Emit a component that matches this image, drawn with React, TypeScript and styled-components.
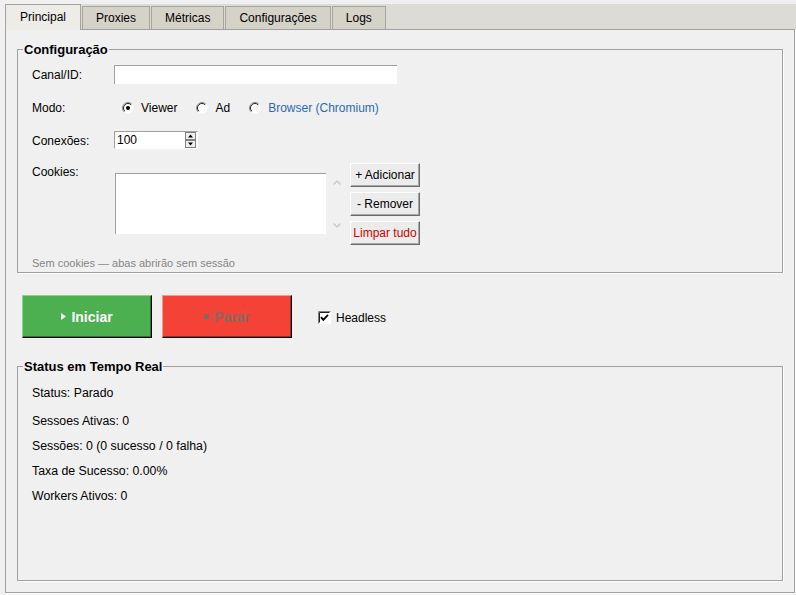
import styled, { createGlobalStyle } from 'styled-components';

const GlobalStyle = createGlobalStyle`
	html, body {
		margin: 0;
		padding: 0;
		background: #f0f0f0;
	}
	body {
		font-family: "Liberation Sans", Arial, sans-serif;
		font-size: 12px;
		color: #000;
	}
	#root {
		width: 796px;
		height: 595px;
		overflow: hidden;
	}
	* {
		box-sizing: border-box;
	}
`;

const TABS = ['Principal', 'Proxies', 'Métricas', 'Configurações', 'Logs'];

const STATS = [
	'Status: Parado',
	'Sessoes Ativas: 0',
	'Sessões: 0 (0 sucesso / 0 falha)',
	'Taxa de Sucesso: 0.00%',
	'Workers Ativos: 0',
];

function RadioMark({ checked }: { checked?: boolean }) {
	return (
		<svg width="12" height="12" viewBox="0 0 12 12">
			<circle cx="6" cy="6" r="5.5" fill="#fff" />
			<path d="M9.9 2.1 A5.5 5.5 0 0 0 2.1 9.9" fill="none" stroke="#8a8a8a" strokeWidth="1" />
			<path d="M9.2 2.8 A4.5 4.5 0 0 0 2.8 9.2" fill="none" stroke="#202020" strokeWidth="1" />
			{checked && <circle cx="6" cy="6" r="2" fill="#000" />}
		</svg>
	);
}

function CheckMark() {
	return (
		<svg width="13" height="13" viewBox="0 0 13 13">
			<rect x="0.5" y="0.5" width="12" height="12" fill="#fff" stroke="#fff" />
			<path d="M0.5 12.5 V0.5 H12.5" fill="none" stroke="#808080" />
			<path d="M1.5 11.5 V1.5 H11.5" fill="none" stroke="#202020" />
			<path d="M3 6.2 L5.3 8.8 L10 3.8" fill="none" stroke="#000" strokeWidth="1.8" />
		</svg>
	);
}

function SpinArrows() {
	return (
		<svg width="11" height="16" viewBox="0 0 11 16">
			<rect x="0.5" y="0.5" width="10" height="7" fill="#f0f0f0" stroke="#808080" />
			<rect x="0.5" y="8.5" width="10" height="7" fill="#f0f0f0" stroke="#808080" />
			<path d="M3 5.5 L5.5 2.5 L8 5.5 Z" fill="#000" />
			<path d="M3 10.5 L5.5 13.5 L8 10.5 Z" fill="#000" />
		</svg>
	);
}

function Chevron({ up }: { up?: boolean }) {
	return (
		<svg width="8" height="5" viewBox="0 0 8 5">
			<path d={up ? 'M0.5 4.5 L4 1 L7.5 4.5' : 'M0.5 0.5 L4 4 L7.5 0.5'} fill="none" stroke="#c4c4c4" strokeWidth="1.2" />
		</svg>
	);
}

export default function App() {
	return (
		<>
			<GlobalStyle />
			<Window>
				<TabStrip>
					{TABS.map((t, i) => (
						<Tab key={t} $active={i === 0}>
							{t}
						</Tab>
					))}
				</TabStrip>
				<Panel>
					<Group>
						<Legend>Configuração</Legend>
						<ConfigBody>
							<FormRow $height={19}>
								<Label>Canal/ID:</Label>
								<Entry />
							</FormRow>
							<FormRow $height={20} $gap={13}>
								<Label>Modo:</Label>
								<RadioGroup>
									<RadioOption>
										<RadioMark checked />
										Viewer
									</RadioOption>
									<RadioOption>
										<RadioMark />
										Ad
									</RadioOption>
									<RadioOption $accent>
										<RadioMark />
										Browser (Chromium)
									</RadioOption>
								</RadioGroup>
							</FormRow>
							<FormRow $height={18} $gap={14}>
								<Label>Conexões:</Label>
								<Spinbox>
									<span>100</span>
									<SpinArrows />
								</Spinbox>
							</FormRow>
							<CookieRow>
								<CookieLabel>Cookies:</CookieLabel>
								<CookieBox />
								<ScrollCol>
									<Chevron up />
									<Chevron />
								</ScrollCol>
								<ButtonCol>
									<SmallButton>+ Adicionar</SmallButton>
									<SmallButton>- Remover</SmallButton>
									<SmallButton $danger>Limpar tudo</SmallButton>
								</ButtonCol>
							</CookieRow>
							<Hint>Sem cookies — abas abrirão sem sessão</Hint>
						</ConfigBody>
					</Group>

					<Actions>
						<BigButton $bg="#4caf50" $light="#86d488" $fg="#fff">
							<svg width="5" height="7" viewBox="0 0 5 7">
								<path d="M0 0 L5 3.5 L0 7 Z" fill="#fff" />
							</svg>
							Iniciar
						</BigButton>
						<BigButton $bg="#f44336" $light="#f9978e" $fg="#8a6863">
							<svg width="5" height="5" viewBox="0 0 5 5">
								<rect width="5" height="5" fill="#7d6a67" />
							</svg>
							Parar
						</BigButton>
						<Check>
							<CheckMark />
							Headless
						</Check>
					</Actions>

					<Group $grow>
						<Legend>Status em Tempo Real</Legend>
						<StatusBody>
							{STATS.map((s) => (
								<StatLine key={s}>{s}</StatLine>
							))}
						</StatusBody>
					</Group>
				</Panel>
			</Window>
		</>
	);
}

const Window = styled.div`
	display: flex;
	flex-direction: column;
	padding: 4px 0 0 5px;
	height: 595px;
`;

const TabStrip = styled.div`
	position: relative;
	z-index: 1;
	display: flex;
	align-items: flex-end;
	gap: 1px;
	height: 25px;
	background: #dcdbd5;
`;

const Tab = styled.div<{ $active?: boolean }>`
	display: flex;
	align-items: center;
	height: ${(p) => (p.$active ? 26 : 23)}px;
	margin-bottom: ${(p) => (p.$active ? -1 : 0)}px;
	padding: 0 ${(p) => (p.$active ? 14 : 13)}px ${(p) => (p.$active ? 1 : 0)}px;
	border: 1px solid #a6a59d;
	border-bottom: none;
	background: ${(p) => (p.$active ? '#edece8' : '#d5d2c8')};
	font-size: 12px;
	color: #000;
`;

const Panel = styled.div`
	display: flex;
	flex-direction: column;
	width: 790px;
	height: 564px;
	padding: 12px 11px 11px;
	border: 1px solid #a0a0a0;
	box-shadow: 1px 1px 0 #fff;
	background: #f0f0f0;
`;

const Group = styled.fieldset<{ $grow?: boolean }>`
	margin: 0;
	padding: 0;
	min-width: 0;
	border: 1px solid #a0a0a0;
	box-shadow: 1px 1px 0 #fff;
	${(p) => (p.$grow ? 'flex: 1;' : '')}
`;

const Legend = styled.legend`
	margin-left: 5px;
	padding: 0 1px;
	font-size: 13px;
	font-weight: bold;
	line-height: 15px;
	color: #000;
`;

const ConfigBody = styled.div`
	display: flex;
	flex-direction: column;
	padding: 8px 14px 2px;
`;

const FormRow = styled.div<{ $height: number; $gap?: number }>`
	display: grid;
	grid-template-columns: 82px auto;
	align-items: center;
	height: ${(p) => p.$height}px;
	margin-top: ${(p) => p.$gap ?? 0}px;
`;

const Label = styled.span`
	line-height: 14px;
	padding-top: 1px;
`;

const Entry = styled.div`
	width: 283px;
	height: 19px;
	background: #fff;
	border-top: 1px solid #a0a0a0;
	border-left: 1px solid #a0a0a0;
`;

const RadioGroup = styled.div`
	display: flex;
	align-items: center;
	gap: 19px;
	padding: 2px 0 0 8px;
`;

const RadioOption = styled.label<{ $accent?: boolean }>`
	display: flex;
	align-items: center;
	gap: 7px;
	color: ${(p) => (p.$accent ? '#2b6bb2' : '#000')};
`;

const Spinbox = styled.div`
	display: flex;
	align-items: center;
	justify-content: space-between;
	width: 84px;
	height: 18px;
	padding: 0 1px 0 2px;
	background: #fff;
	border-top: 1px solid #a0a0a0;
	border-left: 1px solid #a0a0a0;
	border-right: 1px solid #fff;
	border-bottom: 1px solid #fff;
`;

const CookieRow = styled.div`
	display: flex;
	align-items: flex-start;
	margin-top: 14px;
`;

const CookieLabel = styled.span`
	width: 83px;
	padding-top: 2px;
	line-height: 14px;
`;

const CookieBox = styled.div`
	width: 211px;
	height: 61px;
	margin-top: 10px;
	background: #fff;
	border-top: 1px solid #a0a0a0;
	border-left: 1px solid #a0a0a0;
`;

const ScrollCol = styled.div`
	display: flex;
	flex-direction: column;
	align-items: center;
	justify-content: space-between;
	width: 22px;
	height: 61px;
	margin-top: 10px;
	padding: 7px 0 6px;
`;

const ButtonCol = styled.div`
	display: flex;
	flex-direction: column;
	gap: 5px;
	margin-left: 2px;
`;

const SmallButton = styled.button<{ $danger?: boolean }>`
	width: 70px;
	height: 24px;
	padding: 0;
	font-family: inherit;
	font-size: 12px;
	color: ${(p) => (p.$danger ? '#d40000' : '#000')};
	background: #ececec;
	border: 1px solid;
	border-color: #fff #6a6a6a #6a6a6a #fff;
	box-shadow: inset -1px -1px 0 #a8a8a8;
`;

const Hint = styled.div`
	margin-top: 11px;
	font-size: 11px;
	line-height: 14px;
	color: #858585;
`;

const Actions = styled.div`
	display: flex;
	align-items: center;
	gap: 10px;
	margin: 22px 0 21px 5px;
`;

const BigButton = styled.button<{ $bg: string; $light: string; $fg: string }>`
	display: flex;
	align-items: center;
	justify-content: center;
	gap: 5px;
	width: 130px;
	height: 43px;
	padding: 0;
	font-family: inherit;
	font-size: 14px;
	font-weight: bold;
	color: ${(p) => p.$fg};
	background: ${(p) => p.$bg};
	border: 1px solid;
	border-color: ${(p) => p.$light} #000 #000 ${(p) => p.$light};
	box-shadow: inset -1px -1px 0 rgba(0, 0, 0, 0.35);
`;

const Check = styled.label`
	display: flex;
	align-items: center;
	gap: 5px;
	margin: 2px 0 0 16px;
`;

const StatusBody = styled.div`
	display: flex;
	flex-direction: column;
	gap: 11px;
	padding: 12px 14px 0;
	font-size: 12.3px;
`;

const StatLine = styled.div`
	line-height: 14px;
	&:nth-child(2) {
		margin-top: 3px;
	}
`;
